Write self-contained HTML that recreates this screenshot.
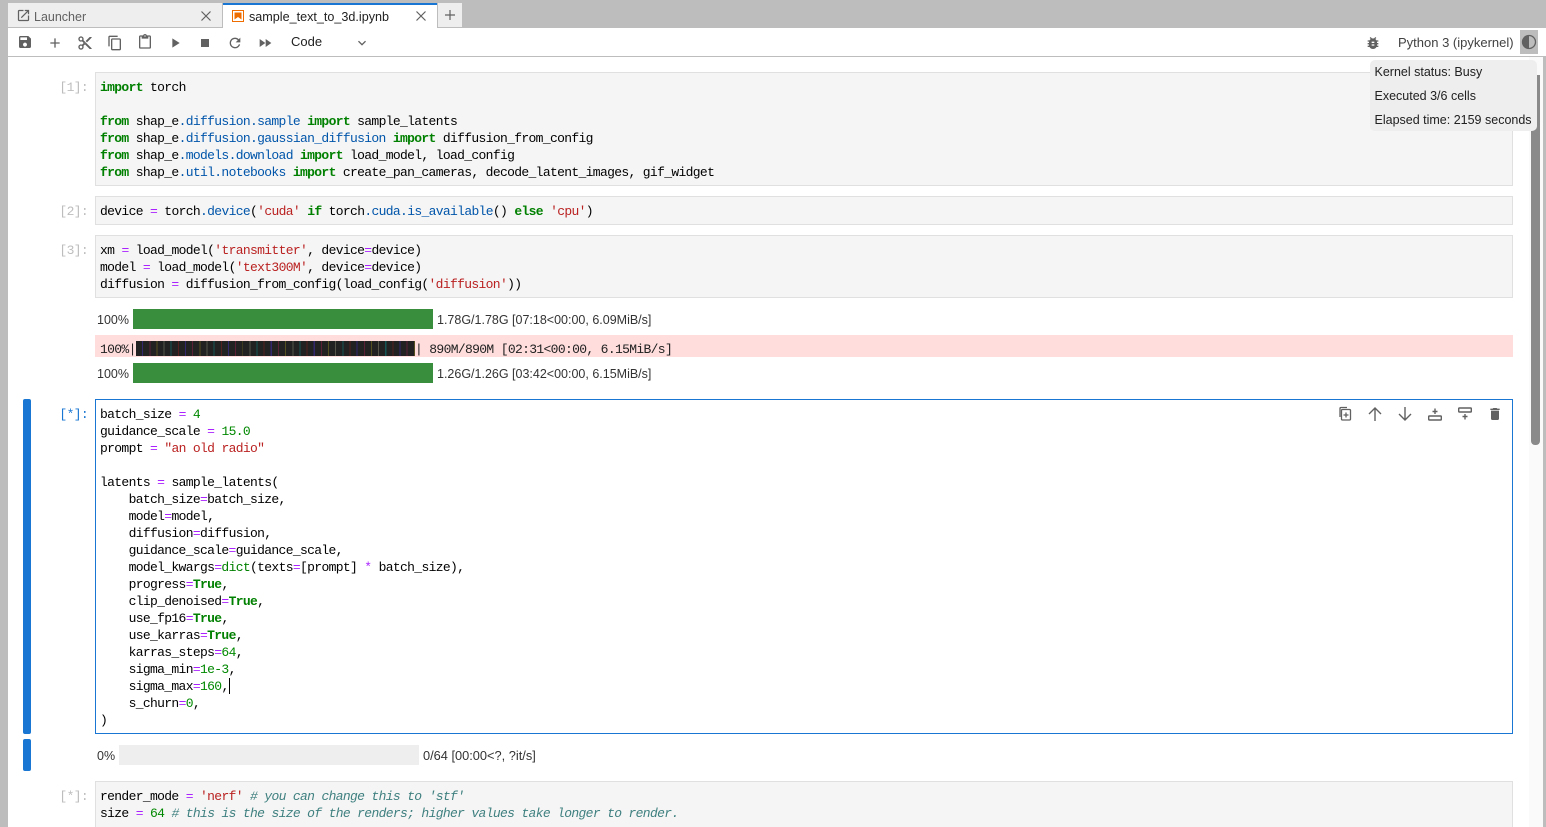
<!DOCTYPE html>
<html><head><meta charset="utf-8"><title>sample_text_to_3d.ipynb</title>
<style>
*{box-sizing:border-box}
html,body{margin:0;padding:0;width:1546px;height:827px;overflow:hidden;background:#bdbdbd;font-family:"Liberation Sans",sans-serif}
.a{position:absolute}
#main{left:8px;top:57px;width:1535px;height:770px;background:#fff}
.cell{position:absolute;left:95px;width:1418px;background:#f5f5f5;border:1px solid #e0e0e0}
pre{position:absolute;left:100px;margin:0;font:13px/17px "Liberation Mono",monospace;letter-spacing:-.66px;color:#000;white-space:pre}
.k{color:#008000;font-weight:bold}.m{color:#05a}.o{color:#a2f}.n{color:#080}.s{color:#ba2121}.c{color:#408080;font-style:italic}.b{color:#008000}
.pr{position:absolute;left:40px;width:48px;text-align:right;font:13px/17px "Liberation Mono",monospace;letter-spacing:-.66px;color:#bdbdbd}
.t{position:absolute;font-size:12.5px;line-height:16px;color:#333;white-space:nowrap}
svg{position:absolute;fill:#616161}
.x{fill:none;stroke:#616161;stroke-width:1.200}
.tab{position:absolute;top:4px;height:25px;font-size:12.5px;line-height:26px;color:#616161}
</style></head><body>
<div class="a" style="left:8px;top:3px;width:214px;height:24px;background:#eee"></div>
<div class="a" style="left:223px;top:3px;width:214px;height:25px;background:#fff;border-top:2px solid #1976d2"></div>
<div class="a" style="left:438px;top:3px;width:24px;height:24px;background:#eee"></div>
<div class="a" style="left:8px;top:28px;width:1538px;height:29px;background:#fff;border-bottom:1px solid #bdbdbd"></div>
<div class="a" id="main"></div>

<svg style="left:16px;top:8px" width="15" height="15" viewBox="0 0 24 24"><path d="M19 19H5V5h7V3H5c-1.110 0-2 .9-2 2v14c0 1.100.89 2 2 2h14c1.100 0 2-.9 2-2v-7h-2v7zM14 3v2h3.590l-9.830 9.830 1.410 1.410L19 6.410V10h2V3h-7z"/></svg>
<div class="tab" style="left:34px;color:#616161">Launcher</div>
<svg class="x" style="left:200px;top:10px" width="12" height="12" viewBox="0 0 12 12"><path d="M1.500 1.500l9 9M10.500 1.500l-9 9"/></svg>
<svg style="left:232px;top:10px" width="12" height="12" viewBox="0 0 12 12"><rect width="12" height="12" fill="#ef6c00"/><rect x="1" y="1" width="10" height="10" fill="#fff"/><path d="M2.500 2.500h7v7L6 7 2.500 9.500z" fill="#ef6c00"/></svg>
<div class="tab" style="left:249px;color:#212121;font-size:12.6px">sample_text_to_3d.ipynb</div>
<svg class="x" style="left:415px;top:10px" width="12" height="12" viewBox="0 0 12 12"><path d="M1.500 1.500l9 9M10.500 1.500l-9 9"/></svg>
<svg class="x" style="left:444px;top:9px" width="12" height="12" viewBox="0 0 12 12"><path d="M6 1v10M1 6h10"/></svg>

<svg style="left:17px;top:34px" width="16" height="16" viewBox="0 0 24 24"><path d="M17 3H5c-1.110 0-2 .9-2 2v14c0 1.100.89 2 2 2h14c1.100 0 2-.9 2-2V7l-4-4zm-5 16c-1.660 0-3-1.340-3-3s1.340-3 3-3 3 1.340 3 3-1.340 3-3 3zm3-10H5V5h10v4z"/></svg>
<svg style="left:47px;top:35px" width="16" height="16" viewBox="0 0 24 24"><path d="M19 13h-6v6h-2v-6H5v-2h6V5h2v6h6v2z"/></svg>
<svg style="left:77px;top:35px" width="16" height="16" viewBox="0 0 24 24"><path d="M9.640 7.640c.23-.5.36-1.050.36-1.640 0-2.210-1.790-4-4-4S2 3.790 2 6s1.790 4 4 4c.59 0 1.140-.13 1.640-.36L10 12l-2.360 2.360C7.140 14.130 6.590 14 6 14c-2.210 0-4 1.790-4 4s1.790 4 4 4 4-1.790 4-4c0-.59-.13-1.140-.36-1.640L12 14l7 7h3v-1L9.640 7.640zM6 8c-1.100 0-2-.89-2-2s.9-2 2-2 2 .89 2 2-.9 2-2 2zm0 12c-1.100 0-2-.89-2-2s.9-2 2-2 2 .89 2 2-.9 2-2 2zm6-7.500c-.28 0-.5-.22-.5-.5s.22-.5.5-.5.5.22.5.5-.22.5-.5.5zM19 3l-6 6 2 2 7-7V3z"/></svg>
<svg style="left:107px;top:35px" width="16" height="16" viewBox="0 0 24 24"><path d="M16 1H4c-1.100 0-2 .9-2 2v14h2V3h12V1zm3 4H8c-1.100 0-2 .9-2 2v14c0 1.100.9 2 2 2h11c1.100 0 2-.9 2-2V7c0-1.100-.9-2-2-2zm0 16H8V7h11v14z"/></svg>
<svg style="left:137px;top:34px" width="16" height="16" viewBox="0 0 24 24"><path d="M19 2h-4.180C14.400.84 13.300 0 12 0c-1.300 0-2.400.84-2.820 2H5c-1.100 0-2 .9-2 2v16c0 1.100.9 2 2 2h14c1.100 0 2-.9 2-2V4c0-1.100-.9-2-2-2zm-7 0c.55 0 1 .45 1 1s-.45 1-1 1-1-.45-1-1 .45-1 1-1zm7 18H5V4h2v3h10V4h2v16z"/></svg>
<svg style="left:167px;top:35px" width="16" height="16" viewBox="0 0 24 24"><path d="M8 5v14l11-7z"/></svg>
<svg style="left:197px;top:35px" width="16" height="16" viewBox="0 0 24 24"><path d="M6 6h12v12H6z"/></svg>
<svg style="left:227px;top:35px" width="16" height="16" viewBox="0 0 24 24"><path d="M17.650 6.350C16.200 4.900 14.210 4 12 4c-4.420 0-7.990 3.580-7.990 8s3.570 8 7.990 8c3.730 0 6.840-2.550 7.730-6h-2.080c-.82 2.330-3.040 4-5.650 4-3.310 0-6-2.690-6-6s2.690-6 6-6c1.660 0 3.140.69 4.220 1.780L13 11h7V4l-2.350 2.350z"/></svg>
<svg style="left:257px;top:35px" width="16" height="16" viewBox="0 0 24 24"><path d="M4 18l8.500-6L4 6v12zm9-12v12l8.500-6L13 6z"/></svg>
<div class="t" style="left:291px;top:34px;font-size:13px;color:#212121">Code</div>
<svg style="left:354px;top:35px" width="16" height="16" viewBox="0 0 24 24"><path d="M7.410 8.590L12 13.170l4.590-4.580L18 10l-6 6-6-6z"/></svg>

<svg style="left:1365px;top:35px" width="16" height="16" viewBox="0 0 24 24"><path d="M20 8h-2.810c-.45-.78-1.070-1.450-1.820-1.960L17 4.410 15.590 3l-2.170 2.170C12.960 5.060 12.490 5 12 5c-.49 0-.96.06-1.410.17L8.410 3 7 4.410l1.620 1.630C7.880 6.550 7.260 7.220 6.810 8H4v2h2.090c-.05.33-.09.66-.09 1v1H4v2h2v1c0 .34.04.67.09 1H4v2h2.810c1.040 1.790 2.970 3 5.190 3s4.150-1.210 5.190-3H20v-2h-2.090c.05-.33.09-.66.09-1v-1h2v-2h-2v-1c0-.34-.04-.67-.09-1H20V8zm-6 8h-4v-2h4v2zm0-4h-4v-2h4v2z"/></svg>
<div class="t" style="left:1398px;top:35px;font-size:13px;color:#424242">Python 3 (ipykernel)</div>
<div class="a" style="left:1520px;top:30px;width:18px;height:24px;background:#bdbdbd"></div>
<svg style="left:1521px;top:34px;fill:none" width="16" height="16" viewBox="0 0 16 16"><circle cx="8" cy="8" r="6.500" stroke="#616161" stroke-width="1.300"/><path d="M8 1.500a6.500 6.500 0 0 0 0 13z" fill="#616161"/></svg>

<div class="a" style="left:1529px;top:57px;width:14px;height:770px;background:#fafafa"></div>
<div class="a" style="left:1531px;top:75px;width:9px;height:370px;background:#8a8a8a;border-radius:0 0 4px 4px"></div>

<!-- cell 1 -->
<div class="pr" style="top:79px">[1]:</div>
<div class="cell" style="top:72px;height:114px"></div>
<pre style="top:79px"><span class="k">import</span> torch

<span class="k">from</span> shap_e<span class="m">.diffusion.sample</span> <span class="k">import</span> sample_latents
<span class="k">from</span> shap_e<span class="m">.diffusion.gaussian_diffusion</span> <span class="k">import</span> diffusion_from_config
<span class="k">from</span> shap_e<span class="m">.models.download</span> <span class="k">import</span> load_model, load_config
<span class="k">from</span> shap_e<span class="m">.util.notebooks</span> <span class="k">import</span> create_pan_cameras, decode_latent_images, gif_widget</pre>

<!-- cell 2 -->
<div class="pr" style="top:203px">[2]:</div>
<div class="cell" style="top:196px;height:29px"></div>
<pre style="top:203px">device <span class="o">=</span> torch<span class="m">.device</span>(<span class="s">'cuda'</span> <span class="k">if</span> torch<span class="m">.cuda.is_available</span>() <span class="k">else</span> <span class="s">'cpu'</span>)</pre>

<!-- cell 3 -->
<div class="pr" style="top:242px">[3]:</div>
<div class="cell" style="top:235px;height:63px"></div>
<pre style="top:242px">xm <span class="o">=</span> load_model(<span class="s">'transmitter'</span>, device<span class="o">=</span>device)
model <span class="o">=</span> load_model(<span class="s">'text300M'</span>, device<span class="o">=</span>device)
diffusion <span class="o">=</span> diffusion_from_config(load_config(<span class="s">'diffusion'</span>))</pre>

<!-- outputs -->
<div class="t" style="left:97px;top:312px">100%</div>
<div class="a" style="left:133px;top:309px;width:300px;height:20px;background:#388e3c"></div>
<div class="t" style="left:437px;top:312px">1.78G/1.78G [07:18&lt;00:00, 6.09MiB/s]</div>

<div class="a" style="left:95px;top:335px;width:1418px;height:22px;background:#fdd"></div>
<pre style="top:341px;color:#212121">100%|</pre>
<div class="a" style="left:136px;top:341px;width:279px;height:15px;background:repeating-linear-gradient(90deg,#222 0,#222 6px,#33286e 6px,#33286e 7.150px,#222 7.150px,#222 13.300px,#5a2035 13.300px,#5a2035 14.300px,#222 14.300px,#222 20.450px,#55501f 20.450px,#55501f 21.450px,#222 21.450px,#222 27.600px,#55554a 27.600px,#55554a 28.600px,#222 28.600px,#222 34.750px,#155555 34.750px,#155555 35.750px,#222 35.750px,#222 41.900px,#552020 41.900px,#552020 42.900px)"></div>
<pre style="top:341px;left:415px;color:#212121">| 890M/890M [02:31&lt;00:00, 6.15MiB/s]</pre>

<div class="t" style="left:97px;top:366px">100%</div>
<div class="a" style="left:133px;top:363px;width:300px;height:20px;background:#388e3c"></div>
<div class="t" style="left:437px;top:366px">1.26G/1.26G [03:42&lt;00:00, 6.15MiB/s]</div>

<!-- active cell -->
<div class="a" style="left:23px;top:399px;width:8px;height:335px;background:#1976d2;border-radius:2px"></div>
<div class="pr" style="top:406px;color:#1976d2">[*]:</div>
<div class="cell" style="top:399px;height:335px;background:#fff;border-color:#1976d2"></div>
<pre style="top:406px">batch_size <span class="o">=</span> <span class="n">4</span>
guidance_scale <span class="o">=</span> <span class="n">15.0</span>
prompt <span class="o">=</span> <span class="s">"an old radio"</span>

latents <span class="o">=</span> sample_latents(
    batch_size<span class="o">=</span>batch_size,
    model<span class="o">=</span>model,
    diffusion<span class="o">=</span>diffusion,
    guidance_scale<span class="o">=</span>guidance_scale,
    model_kwargs<span class="o">=</span><span class="b">dict</span>(texts<span class="o">=</span>[prompt] <span class="o">*</span> batch_size),
    progress<span class="o">=</span><span class="k">True</span>,
    clip_denoised<span class="o">=</span><span class="k">True</span>,
    use_fp16<span class="o">=</span><span class="k">True</span>,
    use_karras<span class="o">=</span><span class="k">True</span>,
    karras_steps<span class="o">=</span><span class="n">64</span>,
    sigma_min<span class="o">=</span><span class="n">1e-3</span>,
    sigma_max<span class="o">=</span><span class="n">160</span>,
    s_churn<span class="o">=</span><span class="n">0</span>,
)</pre>
<div class="a" style="left:229px;top:678px;width:1px;height:16px;background:#000"></div>

<svg style="left:1337px;top:406px;fill:none;stroke:#616161;stroke-width:1.300" width="16" height="16" viewBox="0 0 16 16"><path d="M3 11V2.500a1 1 0 0 1 1-1h6"/><rect x="4.500" y="3.500" width="9" height="10.500" rx="1"/><path d="M9 6.500v5M6.500 9h5"/></svg>
<svg class="x" style="left:1367px;top:406px;stroke-width:1.400" width="16" height="16" viewBox="0 0 16 16"><path d="M8 15V2M2 8l6-6 6 6"/></svg>
<svg class="x" style="left:1397px;top:406px;stroke-width:1.400" width="16" height="16" viewBox="0 0 16 16"><path d="M8 1v13M2 8l6 6 6-6"/></svg>
<svg style="left:1427px;top:406px;fill:none;stroke:#616161;stroke-width:1.400" width="16" height="16" viewBox="0 0 16 16"><rect x="1.700" y="10" width="12.600" height="4" rx=".6"/><path d="M8 2.500v5.500M5.500 5.500h5"/></svg>
<svg style="left:1457px;top:406px;fill:none;stroke:#616161;stroke-width:1.400" width="16" height="16" viewBox="0 0 16 16"><rect x="1.700" y="2" width="12.600" height="4" rx=".6"/><path d="M8 8v5.500M5.500 10.500h5"/></svg>
<svg style="left:1487px;top:406px" width="16" height="16" viewBox="0 0 24 24"><path d="M6 19c0 1.100.9 2 2 2h8c1.100 0 2-.9 2-2V7H6v12zM19 4h-3.500l-1-1h-5l-1 1H5v2h14V4z"/></svg>

<!-- progress -->
<div class="a" style="left:23px;top:739px;width:8px;height:32px;background:#1976d2;border-radius:2px"></div>
<div class="t" style="left:97px;top:748px">0%</div>
<div class="a" style="left:119px;top:745px;width:300px;height:20px;background:#eee"></div>
<div class="t" style="left:423px;top:748px;font-size:12.8px">0/64 [00:00&lt;?, ?it/s]</div>

<!-- cell 5 -->
<div class="pr" style="top:788px">[*]:</div>
<div class="cell" style="top:781px;height:46px;border-bottom:0"></div>
<pre style="top:788px">render_mode <span class="o">=</span> <span class="s">'nerf'</span> <span class="c"># you can change this to 'stf'</span>
size <span class="o">=</span> <span class="n">64</span> <span class="c"># this is the size of the renders; higher values take longer to render.</span></pre>

<!-- tooltip -->
<div class="a" style="left:1370px;top:60px;width:167px;height:71px;background:#eee;border-radius:5px"></div>
<div class="t" style="left:1374.500px;top:64px;color:#212121">Kernel status: Busy</div>
<div class="t" style="left:1374.500px;top:88px;color:#212121">Executed 3/6 cells</div>
<div class="t" style="left:1374.500px;top:112px;color:#212121">Elapsed time: 2159 seconds</div>
</body></html>
